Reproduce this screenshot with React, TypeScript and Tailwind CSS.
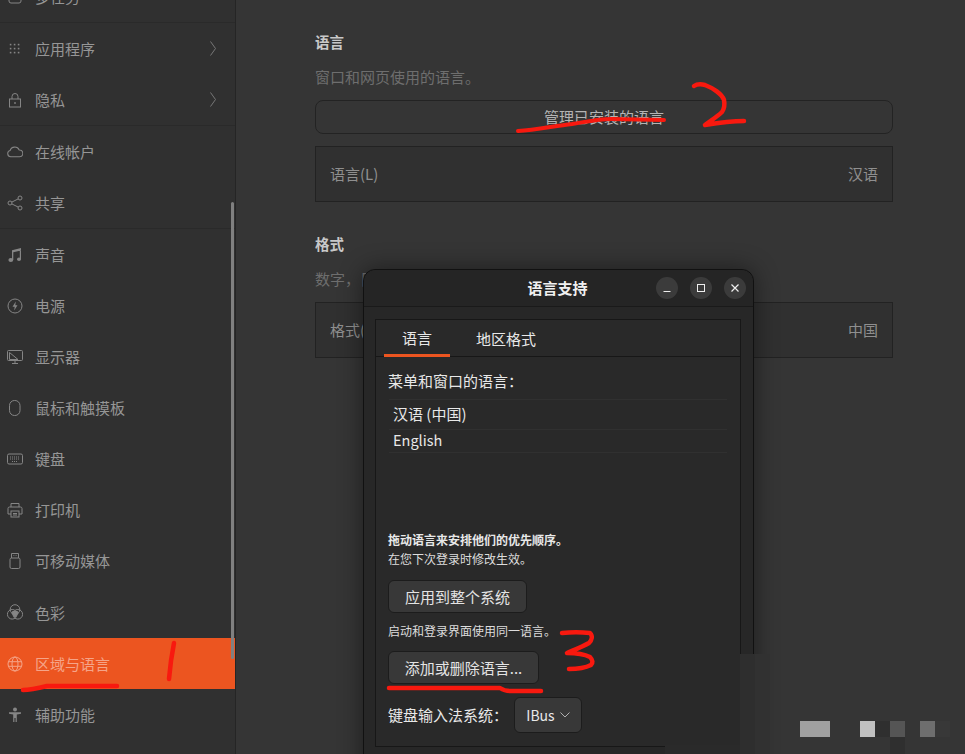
import React from "react";

const ic = "w-4 h-4 shrink-0 text-[#858585]";

// settings sidebar glyphs, all on a 16 grid
const icons: Record<string, React.ReactNode> = {
  tasks: <rect x="2" y="2" width="12" height="12" rx="2" fill="none" stroke="currentColor" />,
  apps: (
    <g fill="currentColor">
      {[3, 7, 11].map((x) => [3, 7, 11].map((y) => <rect key={`${x}-${y}`} x={x - 0.2} y={y - 0.2} width="1.6" height="1.6" />))}
    </g>
  ),
  lock: (
    <g fill="none" stroke="currentColor">
      <rect x="2.5" y="7" width="11" height="8" />
      <path d="M5 7V4.5a3 3 0 0 1 6 0V7" />
      <rect x="7.2" y="10.2" width="1.6" height="1.6" fill="currentColor" stroke="none" />
    </g>
  ),
  cloud: <path d="M4 13a3 3 0 0 1-.6-5.9A4.6 4.6 0 0 1 12 6.6 3.2 3.2 0 0 1 12.3 13z" fill="none" stroke="currentColor" transform="translate(-0.5 -1) scale(1.06)" />,
  share: (
    <g fill="none" stroke="currentColor">
      <circle cx="3" cy="8" r="2" />
      <circle cx="13" cy="3" r="2" />
      <circle cx="13" cy="13" r="2" />
      <path d="M4.8 7.1 11.2 3.9M4.8 8.9l6.4 3.2" />
    </g>
  ),
  music: (
    <g fill="currentColor">
      <path d="M5 3.2 14 1v2.4L6.3 5.3V13H5zM12.8 2h1.2v10h-1.2z" />
      <ellipse cx="3.8" cy="13" rx="2.4" ry="1.9" />
      <ellipse cx="12" cy="12.2" rx="2" ry="1.7" />
    </g>
  ),
  power: (
    <g>
      <circle cx="8" cy="8" r="7" fill="none" stroke="currentColor" />
      <path d="M8.8 3.5 5.5 8.8h2.2L7.2 12.5l3.3-5.3H8.3z" fill="currentColor" />
    </g>
  ),
  display: (
    <g fill="none" stroke="currentColor">
      <rect x="0.5" y="1.5" width="15" height="10" rx="1" />
      <path d="M2.5 3.5 11 10.5H2.5zM5 14.5h6M8 11.5v3" />
    </g>
  ),
  mouse: <rect x="2.5" y="0.5" width="10.5" height="15" rx="5" fill="none" stroke="currentColor" />,
  keyboard: (
    <g fill="none" stroke="currentColor">
      <rect x="0.5" y="3" width="15" height="10" rx="1.5" />
      <path d="M3 6h10M3 8h10M5 10.5h6" strokeDasharray="1 1" />
    </g>
  ),
  printer: (
    <g fill="none" stroke="currentColor">
      <path d="M4 5V1.5h8V5M4 12H1V6.5A1.5 1.5 0 0 1 2.5 5h11A1.5 1.5 0 0 1 15 6.5V12h-3" />
      <rect x="4" y="9" width="8" height="6" />
      <path d="M6 11.5h4M6 13h4" />
    </g>
  ),
  usb: (
    <g fill="none" stroke="currentColor">
      <rect x="3" y="5" width="10" height="10.5" rx="1.5" />
      <path d="M4.5 5V0.5h7V5M6.5 2.5h.8M8.7 2.5h.8" />
    </g>
  ),
  color: (
    <g stroke="currentColor" fill="none">
      <circle cx="8" cy="5.5" r="4.8" />
      <circle cx="5.2" cy="10.3" r="4.8" />
      <circle cx="10.8" cy="10.3" r="4.8" />
      <path d="M5.5 7.5h5l.5 2-3 3.5-3-3.5z" fill="currentColor" />
    </g>
  ),
  globe: (
    <g fill="none" stroke="currentColor">
      <circle cx="8" cy="8" r="7" />
      <ellipse cx="8" cy="8" rx="3" ry="7" />
      <path d="M1.3 5.7h13.4M1.3 10.3h13.4" />
    </g>
  ),
  access: (
    <g fill="currentColor">
      <circle cx="8" cy="2.5" r="2" />
      <path d="M2 5.3h12v1.4l-4.2.7V15H8.6v-4H7.4v4H6.2V7.4L2 6.7z" />
    </g>
  ),
};

const rows = [
  { icon: "tasks", label: "多任务", h: "h-[51px]", sep: true },
  { icon: "apps", label: "应用程序", h: "h-[51px]", arrow: true },
  { icon: "lock", label: "隐私", h: "h-[51px]", arrow: true, sep: true },
  { icon: "cloud", label: "在线帐户", h: "h-[51px]" },
  { icon: "share", label: "共享", h: "h-[51px]", sep: true },
  { icon: "music", label: "声音", h: "h-[51px]" },
  { icon: "power", label: "电源", h: "h-[51px]" },
  { icon: "display", label: "显示器", h: "h-[51px]" },
  { icon: "mouse", label: "鼠标和触摸板", h: "h-[51px]" },
  { icon: "keyboard", label: "键盘", h: "h-[51px]" },
  { icon: "printer", label: "打印机", h: "h-[51px]" },
  { icon: "usb", label: "可移动媒体", h: "h-[51px]" },
  { icon: "color", label: "色彩", h: "h-[52px]" },
  { icon: "globe", label: "区域与语言", h: "h-[51px]", active: true },
  { icon: "access", label: "辅助功能", h: "h-[51px]" },
];

function SidebarRow({ row }: { row: (typeof rows)[number] }) {
  return (
    <>
      <div className={`${row.h} flex items-center pl-[7px] pr-[19px] ${row.active ? "bg-[#ec5520] text-[#f5a488]" : "text-[#969696]"}`}>
        <svg viewBox="0 0 16 16" className={row.active ? "w-4 h-4 shrink-0 text-[#f5a488]" : ic}>
          {icons[row.icon]}
        </svg>
        <span className="ml-[12px] pt-[2px] flex-1 text-[15px]">{row.label}</span>
        {row.arrow && (
          <svg viewBox="0 0 6 15" className="w-[6px] h-[15px] text-[#777777]">
            <path d="M.5.5 5.5 7.5.5 14.5" fill="none" stroke="currentColor" />
          </svg>
        )}
      </div>
      {row.sep && <div className="h-px bg-[#2a2a2a]" />}
    </>
  );
}

function SettingRow({ left, right }: { left: string; right: string }) {
  return (
    <div className="h-[56px] flex items-center justify-between px-[14px] bg-[#303030] border border-[#222222] text-[15px] text-[#8f8f8f]">
      <span>{left}</span>
      <span>{right}</span>
    </div>
  );
}

function WinButton({ children }: { children: React.ReactNode }) {
  return (
    <div className="w-[22px] h-[22px] rounded-full bg-[#3b3b3b] flex items-center justify-center">
      <svg viewBox="0 0 10 10" className="w-[10px] h-[10px] text-[#eeeeee]">
        {children}
      </svg>
    </div>
  );
}

function DialogButton({ children, className }: { children: React.ReactNode; className: string }) {
  return (
    <div className={`h-[33px] pt-[2px] rounded-[6px] bg-[#383838] border border-[#1c1c1c] flex items-center justify-center text-[15px] text-[#e4e4e4] ${className}`}>
      {children}
    </div>
  );
}

function LanguageDialog() {
  return (
    <div className="absolute left-[363px] top-[269px] w-[391px] h-[520px] rounded-t-[12px] bg-[#272727] border border-[#111111] shadow-[0_0_24px_rgba(0,0,0,0.45)] text-[#e8e8e8]">
      <div className="h-[37px] relative flex items-center justify-center border-b border-[#1a1a1a] rounded-t-[12px] bg-[#252525]">
        <span className="mr-[2px] text-[15px] font-bold text-[#f0f0f0]">语言支持</span>
        <div className="absolute right-[7px] top-[7px] flex gap-[12px]">
          <WinButton>
            <path d="M1.5 8.5h7" stroke="currentColor" fill="none" />
          </WinButton>
          <WinButton>
            <rect x="1.5" y="1.5" width="7" height="7" stroke="currentColor" fill="none" />
          </WinButton>
          <WinButton>
            <path d="M1.5 1.5l7 7M8.5 1.5l-7 7" stroke="currentColor" strokeWidth="1.2" fill="none" />
          </WinButton>
        </div>
      </div>

      <div className="px-[11px] pt-[12px]">
        <div className="w-[366px] h-[428px] border border-[#171717] bg-[#292929]">
          <div className="h-[37px] flex border-b border-[#171717] text-[15px]">
            <div className="ml-[8px] w-[66px] h-[37px] pt-[2px] border-b-[3px] border-[#ec5520] flex items-center justify-center">语言</div>
            <div className="ml-[26px] h-[36px] pt-[2px] flex items-center">地区格式</div>
          </div>

          <div className="pl-[12px]">
            <div className="mt-[13px] h-[22px] flex items-center text-[15px]">菜单和窗口的语言：</div>
            <div className="mt-[7px] ml-[1px] w-[338px] border-t border-[#303030] text-[15px]">
              <div className="h-[30px] pl-[4px] flex items-center border-b border-[#303030]">汉语 (中国)</div>
              <div className="h-[23px] pl-[4px] pb-[2px] flex items-center border-b border-[#303030] text-[14.5px]">English</div>
            </div>

            <div className="mt-[78px] h-[18px] flex items-center text-[12px] font-bold">拖动语言来安排他们的优先顺序。</div>
            <div className="mt-px h-[18px] flex items-center text-[12px] text-[#dddddd]">在您下次登录时修改生效。</div>

            <DialogButton className="mt-[12px] w-[139px]">应用到整个系统</DialogButton>
            <div className="mt-[9px] h-[18px] flex items-center text-[12px] text-[#dddddd]">启动和登录界面使用同一语言。</div>
            <DialogButton className="mt-[11px] w-[151px]">添加或删除语言...</DialogButton>

            <div className="mt-[13px] h-[36px] flex items-center text-[15px]">
              <span className="w-[126px]">键盘输入法系统：</span>
              <div className="w-[68px] h-[36px] rounded-[6px] bg-[#383838] border border-[#1c1c1c] flex items-center justify-center gap-[5px] text-[14px]">
                IBus
                <svg viewBox="0 0 10 6" className="w-[10px] h-[6px] text-[#b0b0b0]">
                  <path d="M.5.5 5 5 9.5.5" stroke="currentColor" fill="none" />
                </svg>
              </div>
            </div>
          </div>
        </div>
      </div>
    </div>
  );
}

// the hand-drawn red marks and the mosaic patches sit on top of the screenshot
function Scribbles() {
  return (
    <svg viewBox="0 0 965 754" className="absolute inset-0 w-[965px] h-[754px] pointer-events-none">
      <g fill="none" stroke="#f8190f" strokeWidth="4.5" strokeLinecap="round" strokeLinejoin="round">
        <path d="M174 643c-2 10-4 24-5 36" />
        <path d="M23 690c8 0 16-2 24-4h70" />
        <path d="M518 131c18-1 36-5 54-7 13-2 26-5 39-5l53 1" strokeWidth="4" />
        <path d="M694 86c3-2 7-2 11-1 8 3 17 9 19 15 1 5 0 9-2 12-5 5-12 9-17 13 12-2 26-4 39-4" />
        <path d="M562 633c9-1 19-1 28 0 3 3 2 7-1 10-7 4-15 7-22 10 8 0 17 1 23 4 3 3 3 6 1 8-6 3-15 4-22 4" />
        <path d="M389 688h111c3 2 6 3 10 3h31" />
      </g>
      <rect x="665" y="745" width="75" height="9" fill="#2a2a2a" />
      <rect x="740" y="654" width="15" height="100" fill="#2e2e2e" />
      <rect x="755" y="654" width="15" height="100" fill="#313131" />
      <rect x="800" y="721" width="30" height="16" fill="#a0a0a0" />
      <rect x="860" y="721" width="15" height="16" fill="#c0c0c0" />
      <rect x="875" y="721" width="15" height="16" fill="#2f2f2f" />
      <rect x="890" y="721" width="15" height="16" fill="#555555" />
      <rect x="890" y="737" width="15" height="17" fill="#2f2f2f" />
      <rect x="920" y="721" width="15" height="16" fill="#6e6e6e" />
      <rect x="935" y="721" width="15" height="16" fill="#383838" />
    </svg>
  );
}

export default function App() {
  return (
    <div className="relative w-[965px] h-[754px] overflow-hidden flex bg-[#353535] font-['Noto_Sans_CJK_SC','Noto_Sans',sans-serif]">
      <aside className="relative w-[236px] shrink-0 h-full bg-[#303030] border-r border-[#252525]">
        <div className="-mt-[29px]">
          {rows.map((row) => (
            <SidebarRow key={row.label} row={row} />
          ))}
        </div>
        <div className="absolute left-[231px] top-[202px] w-[3px] h-[457px] rounded-full bg-[#808080]" />
      </aside>

      <main className="pl-[79px] pt-[30px]">
        <div className="w-[578px]">
          <h2 className="h-[24px] flex items-center text-[14.5px] font-bold text-[#c8c8c8]">语言</h2>
          <p className="mt-[11px] h-[24px] flex items-center text-[15px] text-[#6e6e6e]">窗口和网页使用的语言。</p>
          <div className="mt-[11px] h-[34px] rounded-[8px] border border-[#232323] flex items-center justify-center text-[15px] text-[#b4b4b4]">管理已安装的语言</div>
          <div className="mt-[12px]">
            <SettingRow left="语言(L)" right="汉语" />
          </div>
          <h2 className="mt-[30px] h-[24px] flex items-center text-[14.5px] font-bold text-[#c8c8c8]">格式</h2>
          <p className="mt-[11px] h-[24px] flex items-center text-[15px] text-[#6e6e6e]">数字，日期和货币的格式。</p>
          <div className="mt-[11px]">
            <SettingRow left="格式(R)" right="中国" />
          </div>
        </div>
      </main>

      <LanguageDialog />
      <Scribbles />
    </div>
  );
}
